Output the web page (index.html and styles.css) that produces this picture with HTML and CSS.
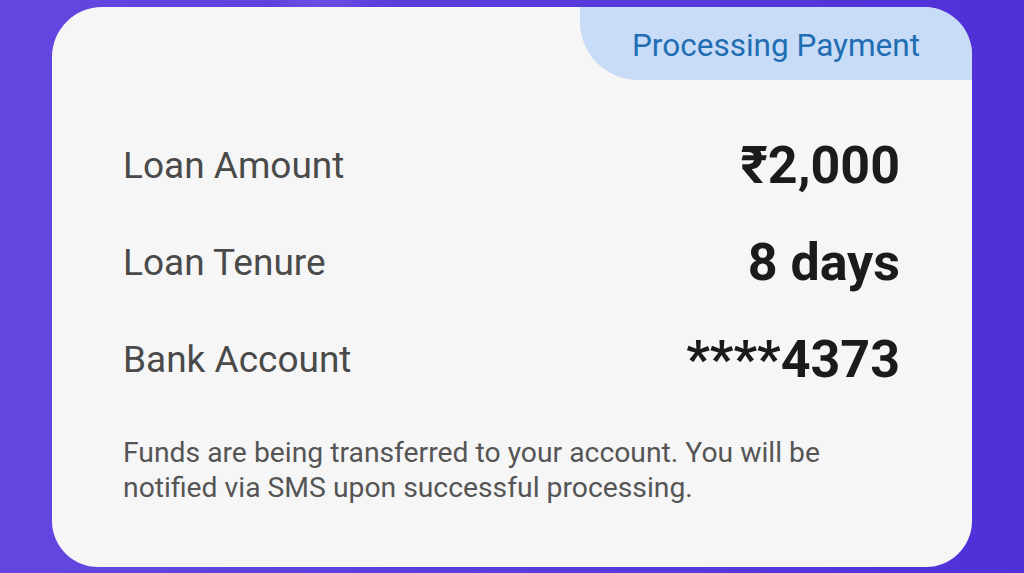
FILE: index.html
```html
<!DOCTYPE html>
<html lang="en">
<head>
<meta charset="utf-8">
<title>Processing Payment</title>
<link rel="stylesheet" href="styles.css">
</head>
<body>
<main class="card">
  <div class="card-head">
    <span class="badge">Processing Payment</span>
  </div>
  <div class="rows">
    <div class="row"><span class="label">Loan Amount</span><span class="value">₹2,000</span></div>
    <div class="row"><span class="label">Loan Tenure</span><span class="value">8 days</span></div>
    <div class="row"><span class="label">Bank Account</span><span class="value">****4373</span></div>
  </div>
  <p class="note">Funds are being transferred to your account. You will be notified via SMS upon successful processing.</p>
</main>
</body>
</html>
```
FILE: styles.css
```css
* { box-sizing: border-box; }
html, body { height: 100%; }
body {
  margin: 0;
  padding: 7px 52px 6px 52px;
  font-family: Roboto, "Liberation Sans", sans-serif;
  background:
    radial-gradient(circle at 320px -30px, rgba(140,120,240,0.55) 0, rgba(140,120,240,0) 60px),
    linear-gradient(90deg, #6446df 0%, #5a3cdc 50%, #4f30d8 100%);
}
.card {
  height: 560px;
  background: #f6f6f6;
  border-radius: 50px 48px 46px 46px;
  overflow: hidden;
  display: flex;
  flex-direction: column;
}
.card-head {
  display: flex;
  justify-content: flex-end;
}
.badge {
  width: 392px;
  height: 73px;
  background: #c9dcf7;
  border-bottom-left-radius: 58px;
  color: #1f6db3;
  font-size: 31.5px;
  display: flex;
  align-items: center;
  padding-left: 52px;
  padding-top: 3px;
}
.rows {
  display: flex;
  flex-direction: column;
  gap: 37px;
  margin-top: 56px;
  padding: 0 72px 0 71px;
}
.row {
  display: flex;
  justify-content: space-between;
  align-items: center;
  line-height: 60px;
  height: 60px;
}
.label {
  font-size: 37px;
  color: #4a4a4a;
}
.value {
  font-size: 52px;
  font-weight: 700;
  color: #1b1b1b;
}
.note {
  margin: 45px 0 0 0;
  padding: 0 100px 0 71px;
  font-size: 28.3px;
  line-height: 35px;
  color: #555555;
}
```
